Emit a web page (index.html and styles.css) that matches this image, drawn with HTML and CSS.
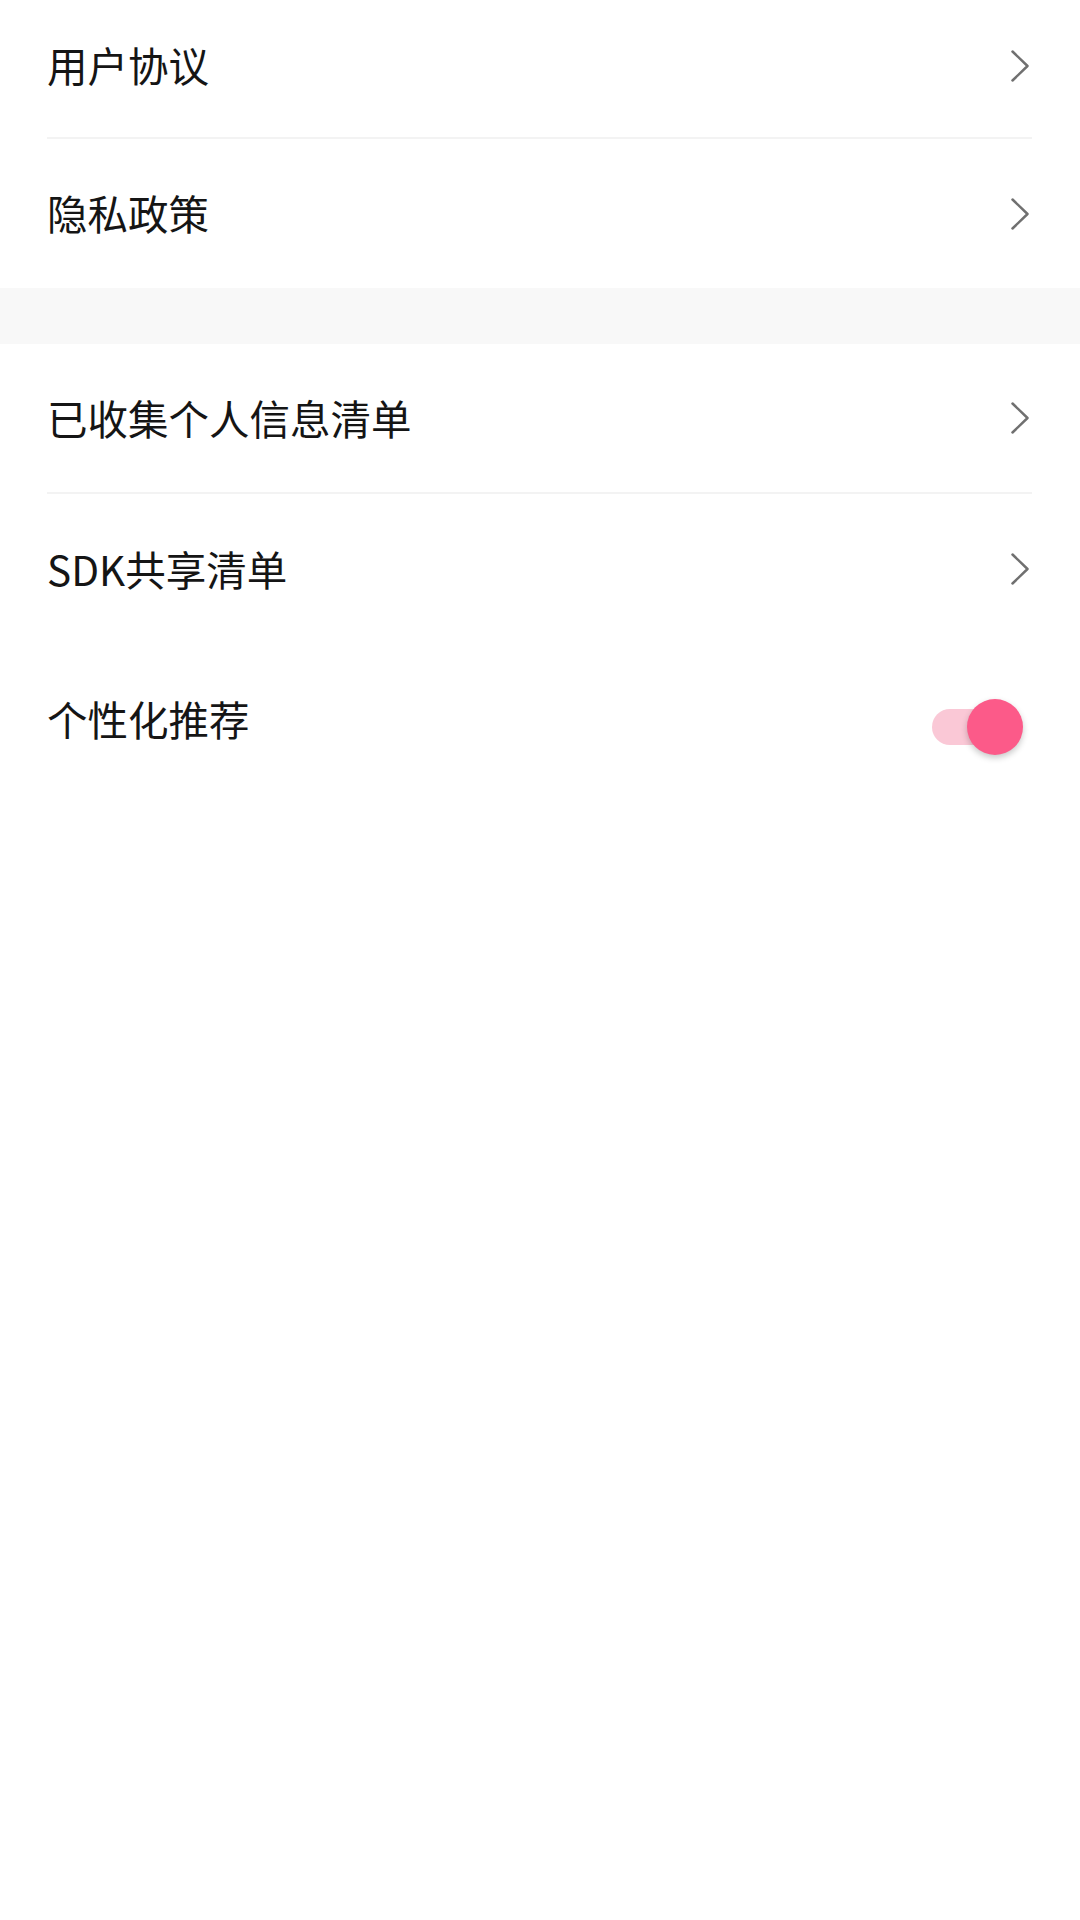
FILE: index.html
```html
<!DOCTYPE html>
<html lang="zh-CN">
<head>
<meta charset="utf-8">
<title>设置</title>
<link rel="stylesheet" href="styles.css">
</head>
<body>
<div class="page">
  <div class="group">
    <div class="row row-first divided">
      <span class="label">用户协议</span>
      <svg class="chev" width="18" height="32" viewBox="0 0 18 32"><polyline points="1.5,1.5 16.5,16 1.5,30.5" fill="none" stroke="#707070" stroke-width="2.5" stroke-linecap="round" stroke-linejoin="round"/></svg>
    </div>
    <div class="row row-second">
      <span class="label">隐私政策</span>
      <svg class="chev" width="18" height="32" viewBox="0 0 18 32"><polyline points="1.5,1.5 16.5,16 1.5,30.5" fill="none" stroke="#707070" stroke-width="2.5" stroke-linecap="round" stroke-linejoin="round"/></svg>
    </div>
  </div>
  <div class="gap"></div>
  <div class="group">
    <div class="row divided">
      <span class="label">已收集个人信息清单</span>
      <svg class="chev" width="18" height="32" viewBox="0 0 18 32"><polyline points="1.5,1.5 16.5,16 1.5,30.5" fill="none" stroke="#707070" stroke-width="2.5" stroke-linecap="round" stroke-linejoin="round"/></svg>
    </div>
    <div class="row">
      <span class="label">SDK共享清单</span>
      <svg class="chev" width="18" height="32" viewBox="0 0 18 32"><polyline points="1.5,1.5 16.5,16 1.5,30.5" fill="none" stroke="#707070" stroke-width="2.5" stroke-linecap="round" stroke-linejoin="round"/></svg>
    </div>
    <div class="row">
      <span class="label">个性化推荐</span>
      <div class="switch on">
        <div class="track"></div>
        <div class="thumb"></div>
      </div>
    </div>
  </div>
</div>
</body>
</html>
```

FILE: styles.css
```css
html, body {
  margin: 0;
  padding: 0;
  background: #ffffff;
}

body {
  width: 1080px;
  height: 1920px;
  font-family: "Noto Sans CJK SC", "Noto Sans", sans-serif;
  color: #151515;
}

.page {
  display: flex;
  flex-direction: column;
}

.group {
  display: flex;
  flex-direction: column;
}

.row {
  box-sizing: border-box;
  height: 150px;
  margin: 0 48px 0 47px;
  display: flex;
  align-items: center;
  justify-content: space-between;
}

.row-first {
  height: 139px;
  padding-bottom: 6px;
}

.row-second {
  height: 149px;
}

.divided {
  border-bottom: 2px solid #f3f3f3;
}

.label {
  font-size: 40.5px;
  line-height: 1;
}

.chev {
  display: block;
  margin-right: 3px;
}

.gap {
  height: 56px;
  background: #f8f8f8;
}

.switch {
  display: flex;
  align-items: center;
  margin-right: 9px;
  margin-top: 16px;
}

.track {
  width: 78px;
  height: 36px;
  border-radius: 18px;
  background: #fac8d6;
}

.thumb {
  width: 56px;
  height: 56px;
  margin-left: -43px;
  border-radius: 50%;
  background: #fc5a89;
  box-shadow: 0 3px 6px rgba(0, 0, 0, 0.22);
}
```
